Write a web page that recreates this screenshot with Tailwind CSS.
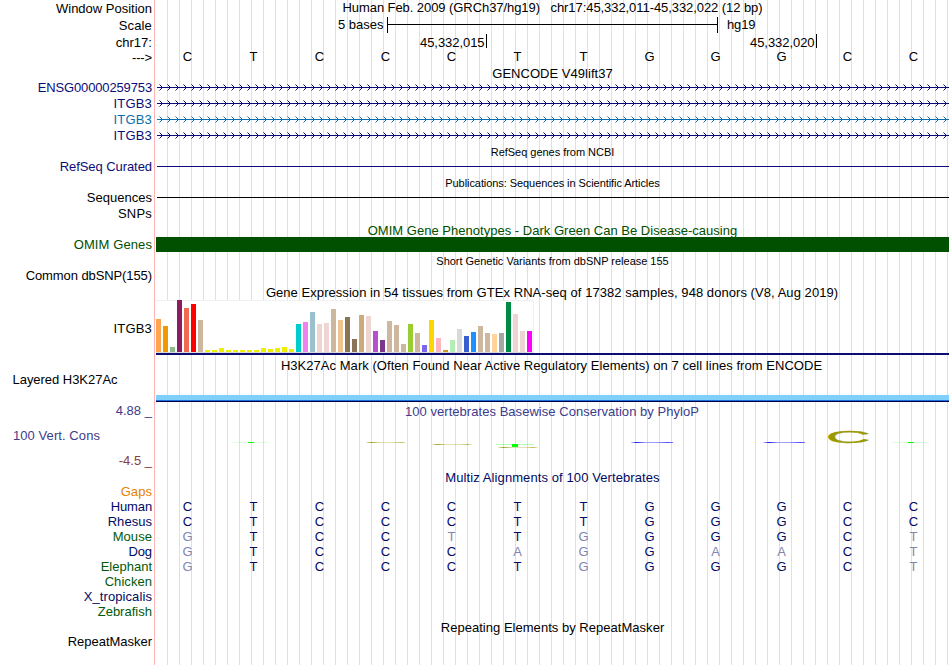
<!DOCTYPE html>
<html lang="en">
<head>
<meta charset="utf-8">
<title>Genome Browser</title>
<script src="https://cdn.jsdelivr.net/npm/@tailwindcss/browser@4"></script>
</head>
<body class="bg-white">
<main class="flex h-[665px] w-[950px] overflow-hidden bg-white font-['Liberation_Sans',Arial,sans-serif] text-[13px] leading-[15px] text-black whitespace-pre">
<aside class="flex w-[155px] shrink-0 flex-col items-end border-r border-[#ffb4b4] pt-px pr-[2px] mr-px">
<div class="h-[17px]"><span data-w="96">Window Position</span></div>
<div class="h-[17px]"><span data-w="33.3">Scale</span></div>
<div class="h-[15px]"><span data-w="36.3">chr17:</span></div>
<div class="h-[30px]"><span data-w="20">---&gt;</span></div>
<div class="h-[16px] text-[#0c0c78]"><span data-w="114.3">ENSG00000259753</span></div>
<div class="h-[16px] text-[#0c0c78]"><span data-w="38.5">ITGB3</span></div>
<div class="h-[16px] text-[#0c6ead]"><span data-w="38.5">ITGB3</span></div>
<div class="h-[31px] text-[#0c0c78]"><span data-w="38.5">ITGB3</span></div>
<div class="h-[31px] text-[#0c0c78]"><span data-w="92.3">RefSeq Curated</span></div>
<div class="h-[16px]"><span data-w="65.3">Sequences</span></div>
<div class="h-[31px]"><span data-w="34">SNPs</span></div>
<div class="h-[31px] text-[#005000]"><span data-w="78.3">OMIM Genes</span></div>
<div class="h-[53px]"><span data-w="126.3">Common dbSNP(155)</span></div>
<div class="h-[51px]"><span data-w="38.5">ITGB3</span></div>
<div class="h-[31px] self-start pl-[12.5px]"><span data-w="105">Layered H3K27Ac</span></div>
<div class="h-[25px] text-[#3c3c8c]"><span data-w="36.3">4.88 _</span></div>
<div class="h-[25px] self-start pl-[13px] text-[#3c3c8c]"><span data-w="87">100 Vert. Cons</span></div>
<div class="h-[31px] text-[#8c3c3c]"><span data-w="33.3">-4.5 _</span></div>
<div class="h-[15px] text-[#e68200]"><span data-w="31.3">Gaps</span></div>
<div class="h-[15px] text-[#000a64]"><span data-w="41.3">Human</span></div>
<div class="h-[15px] text-[#000a64]"><span data-w="44.3">Rhesus</span></div>
<div class="h-[15px] text-[#005a0a]"><span data-w="39.3">Mouse</span></div>
<div class="h-[15px] text-[#000a64]"><span data-w="23.5">Dog</span></div>
<div class="h-[15px] text-[#005a0a]"><span data-w="51.3">Elephant</span></div>
<div class="h-[15px] text-[#005a0a]"><span data-w="47.3">Chicken</span></div>
<div class="h-[15px] text-[#000a64]"><span data-w="68.3">X_tropicalis</span></div>
<div class="h-[30px] text-[#005a0a]"><span data-w="54.3">Zebrafish</span></div>
<div class="h-[15px]"><span data-w="84.3">RepeatMasker</span></div>
</aside>
<section class="flex w-[793px] shrink-0 flex-col bg-[repeating-linear-gradient(90deg,transparent_0px_11px,#dcdcfc_11px_12px)]">
<div class="h-[17px] text-center"><span data-w="420">Human Feb. 2009 (GRCh37/hg19)   chr17:45,332,011-45,332,022 (12 bp)</span></div>
<div class="flex h-[17px]">
<div class="w-[227.5px] text-right"><span data-w="45.5">5 bases</span></div>
<div class="ml-[3.5px] flex h-[16px] w-[331px] items-center border-x border-black"><div class="-mt-px h-px w-full bg-black"></div></div>
<div class="ml-[9px]"><span data-w="28.5">hg19</span></div>
</div>
<div class="flex h-[15px] leading-[17px]">
<div class="h-[14px] w-[331px] border-r border-black pr-[1.5px] text-right"><span data-w="64.5">45,332,015</span></div>
<div class="h-[14px] w-[330px] border-r border-black pr-[1.5px] text-right"><span data-w="64.5">45,332,020</span></div>
</div>
<div class="-ml-[1.5px] grid h-[17px] w-[792px] grid-cols-[repeat(12,66px)] text-center" data-bases="CTCCCTTGGGCC"></div>
<div class="h-[18px] text-center"><span data-w="120.5">GENCODE V49lift37</span></div>
<svg class="ml-px block h-[60px] w-[792px]" viewBox="157 84 792 60" fill="none">
<defs><pattern id="arrow" x="157" y="84" width="8" height="16" patternUnits="userSpaceOnUse"><path d="M2.5.5l3 3l-3 3" stroke="#0c0c78"/></pattern>
<pattern id="arrowBlue" x="157" y="84" width="8" height="16" patternUnits="userSpaceOnUse"><path d="M2.5.5l3 3l-3 3" stroke="#0c6ead"/></pattern></defs>
<path fill="url(#arrow)" d="M157 84h792v32h-792zM157 132h792v12h-792z"/><path fill="url(#arrowBlue)" d="M157 116h792v16h-792z"/>
<path stroke="#0c0c78" d="M157 87.5h792M157 103.5h792M157 135.5h792"/><path stroke="#0c6ead" d="M157 119.5h792"/>
</svg>
<div class="h-[22px] pt-[2px] text-center text-[11px] leading-[12px]"><span data-size="11" data-w="123.5">RefSeq genes from NCBI</span></div>
<div class="ml-px h-px bg-[#0c0c78]"></div>
<div class="h-[30px] pt-[10px] text-center text-[11px] leading-[12px]"><span data-size="11" data-w="215">Publications: Sequences in Scientific Articles</span></div>
<div class="ml-px h-px bg-black"></div>
<div class="h-[39px] pt-[25px] text-center text-[#005000]"><span data-w="369.5">OMIM Gene Phenotypes - Dark Green Can Be Disease-causing</span></div>
<div class="h-[15px] bg-[#005000]"></div>
<div class="h-[33px] pt-[3px] text-center text-[11px] leading-[12px]"><span data-size="11" data-w="232.5">Short Genetic Variants from dbSNP release 155</span></div>
<div class="h-[15px] pr-px text-center"><span data-w="573">Gene Expression in 54 tissues from GTEx RNA-seq of 17382 samples, 948 donors (V8, Aug 2019)</span></div>
<svg id="gtex" class="block h-[53px] w-[378px] shrink-0" viewBox="0 0 378 53" shape-rendering="crispEdges"><path fill="#f0f0f0" d="M0 0h378v53H0z"/><path fill="#fff" d="M0 1h377v51H0z"/><path fill="#d9d9d9" d="M0 52h377v1H0z"/></svg>
<div class="h-[2px] bg-[#0c0c78]"></div>
<div class="h-[40px] pt-[3px] pr-[2px] text-center"><span data-w="542">H3K27Ac Mark (Often Found Near Active Regulatory Elements) on 7 cell lines from ENCODE</span></div>
<div class="h-[5px] bg-[#7fd0ff]"></div><div class="h-px bg-[#1e6ed7]"></div><div class="h-px bg-[#000046]"></div>
<div class="h-[22px] pt-[2px] pr-px text-center text-[#3c3c8c]"><span data-w="294">100 vertebrates Basewise Conservation by PhyloP</span></div>
<svg class="block h-[46px] w-[793px]" viewBox="156 424 793 46">
<defs>
<linearGradient id="olive"><stop offset="0" stop-color="#999900" stop-opacity=".15"/><stop offset=".13" stop-color="#999900" stop-opacity=".9"/><stop offset=".35" stop-color="#999900" stop-opacity=".3"/><stop offset=".7" stop-color="#999900" stop-opacity=".3"/><stop offset=".9" stop-color="#999900" stop-opacity=".65"/><stop offset="1" stop-color="#999900" stop-opacity=".1"/></linearGradient>
<linearGradient id="blue"><stop offset="0" stop-color="#00f" stop-opacity=".15"/><stop offset=".13" stop-color="#00f" stop-opacity=".9"/><stop offset=".35" stop-color="#00f" stop-opacity=".35"/><stop offset=".65" stop-color="#00f" stop-opacity=".4"/><stop offset=".88" stop-color="#00f" stop-opacity=".7"/><stop offset="1" stop-color="#00f" stop-opacity=".5"/></linearGradient>
</defs>
<path fill="#00ff00" fill-opacity=".12" d="M232 442h37v1h-37zM892 442h37v1h-37z"/>
<path fill="#00ff00" fill-opacity=".3" d="M496 444h38v1h-38z"/>
<path fill="#00ff00" d="M248 442h6v1h-6zM512 444h6v3h-6zM908 442h6v1h-6z"/>
<rect x="366" y="442" width="40" height="1" fill="url(#olive)"/><rect x="432" y="444" width="40" height="1" fill="url(#olive)"/><rect x="498" y="447" width="40" height="1" fill="url(#olive)"/>
<rect x="631" y="442" width="42" height="1" fill="url(#blue)"/><rect x="763" y="442" width="42" height="1" fill="url(#blue)"/>
<text transform="translate(825.5 443.3) scale(3.15 .87)" font-size="20" fill="#999900" stroke="#999900" stroke-width=".3">C</text>
</svg>
<div class="h-[29px] text-center text-[#000a64]"><span data-w="215">Multiz Alignments of 100 Vertebrates</span></div>
<div class="-ml-[1.5px] grid h-[121px] w-[792px] auto-rows-[15px] grid-cols-[repeat(12,66px)] text-center text-[#000a64]" data-bases="CTCCCTTGGGCCCTCCCTTGGGCCgTCCtTgGGGCtgTCCCagGaaCtgTCCCTgGGGCt"></div>
<div class="h-[15px] text-center"><span data-w="223.5">Repeating Elements by RepeatMasker</span></div>
</section>
</main>
<script>
// Bases: lowercase marks a mismatch with the reference assembly.
document.querySelectorAll('[data-bases]').forEach(row => {
  for (const b of row.dataset.bases) {
    const cell = document.createElement('div');
    cell.textContent = b.toUpperCase();
    if (b !== b.toUpperCase()) cell.className = 'text-[#8085b2]';
    row.append(cell);
  }
});
// Tissue expression: [height, colour] per bar.
const y = [2, '#eeee00'], bars = [[33,'#ffa54f'],[26,'#ee9a00'],[5,'#8fbc8f'],[52,'#8b1c62'],[44,'#ee6a50'],[48,'#ff0000'],[32,'#cdb79e'],
  y,y,[4,'#eeee00'],y,y,y,y,y,[4,'#eeee00'],[3,'#eeee00'],[4,'#eeee00'],[5,'#eeee00'],[3,'#eeee00'],
  [28,'#00cdcd'],[30,'#ee82ee'],[40,'#9ac0cd'],[28,'#eed5d2'],[29,'#eed5d2'],[43,'#cdb79e'],[32,'#eec591'],[35,'#8b7355'],[13,'#8b7355'],
  [37,'#cdaa7d'],[36,'#eed5d2'],[21,'#b452cd'],[12,'#7a378b'],[31,'#cdb79e'],[27,'#cdb79e'],[8,'#cdb79e'],[28,'#9acd32'],[19,'#cdb79e'],
  [7,'#7a67ee'],[32,'#ffd700'],[14,'#ffb6c1'],[2,'#cd9b1d'],[12,'#b4eeb4'],[23,'#d9d9d9'],[16,'#3a5fcd'],[20,'#1e90ff'],[26,'#cdb79e'],
  [19,'#cdb79e'],[18,'#ffd39b'],[19,'#a6a6a6'],[50,'#008b45'],[38,'#eed5d2'],[21,'#eed5d2'],[21,'#ff00ff']];
const chart = document.getElementById('gtex');
bars.forEach(([h, fill], i) => {
  const r = document.createElementNS('http://www.w3.org/2000/svg', 'rect');
  Object.entries({x: i * 7, y: 52 - h, width: 5, height: h, fill}).forEach(([k, v]) => r.setAttribute(k, v));
  chart.append(r);
});
// Spread each text over its track width (data-w), at its font size (data-size).
const pen = document.createElement('canvas').getContext('2d');
document.querySelectorAll('[data-w]').forEach(s => {
  pen.font = (s.dataset.size || 13) + 'px "Liberation Sans"';
  const gap = (s.dataset.w - pen.measureText(s.textContent).width) / s.textContent.length;
  s.style.letterSpacing = gap.toFixed(3) + 'px';
});
</script>
</body>
</html>
